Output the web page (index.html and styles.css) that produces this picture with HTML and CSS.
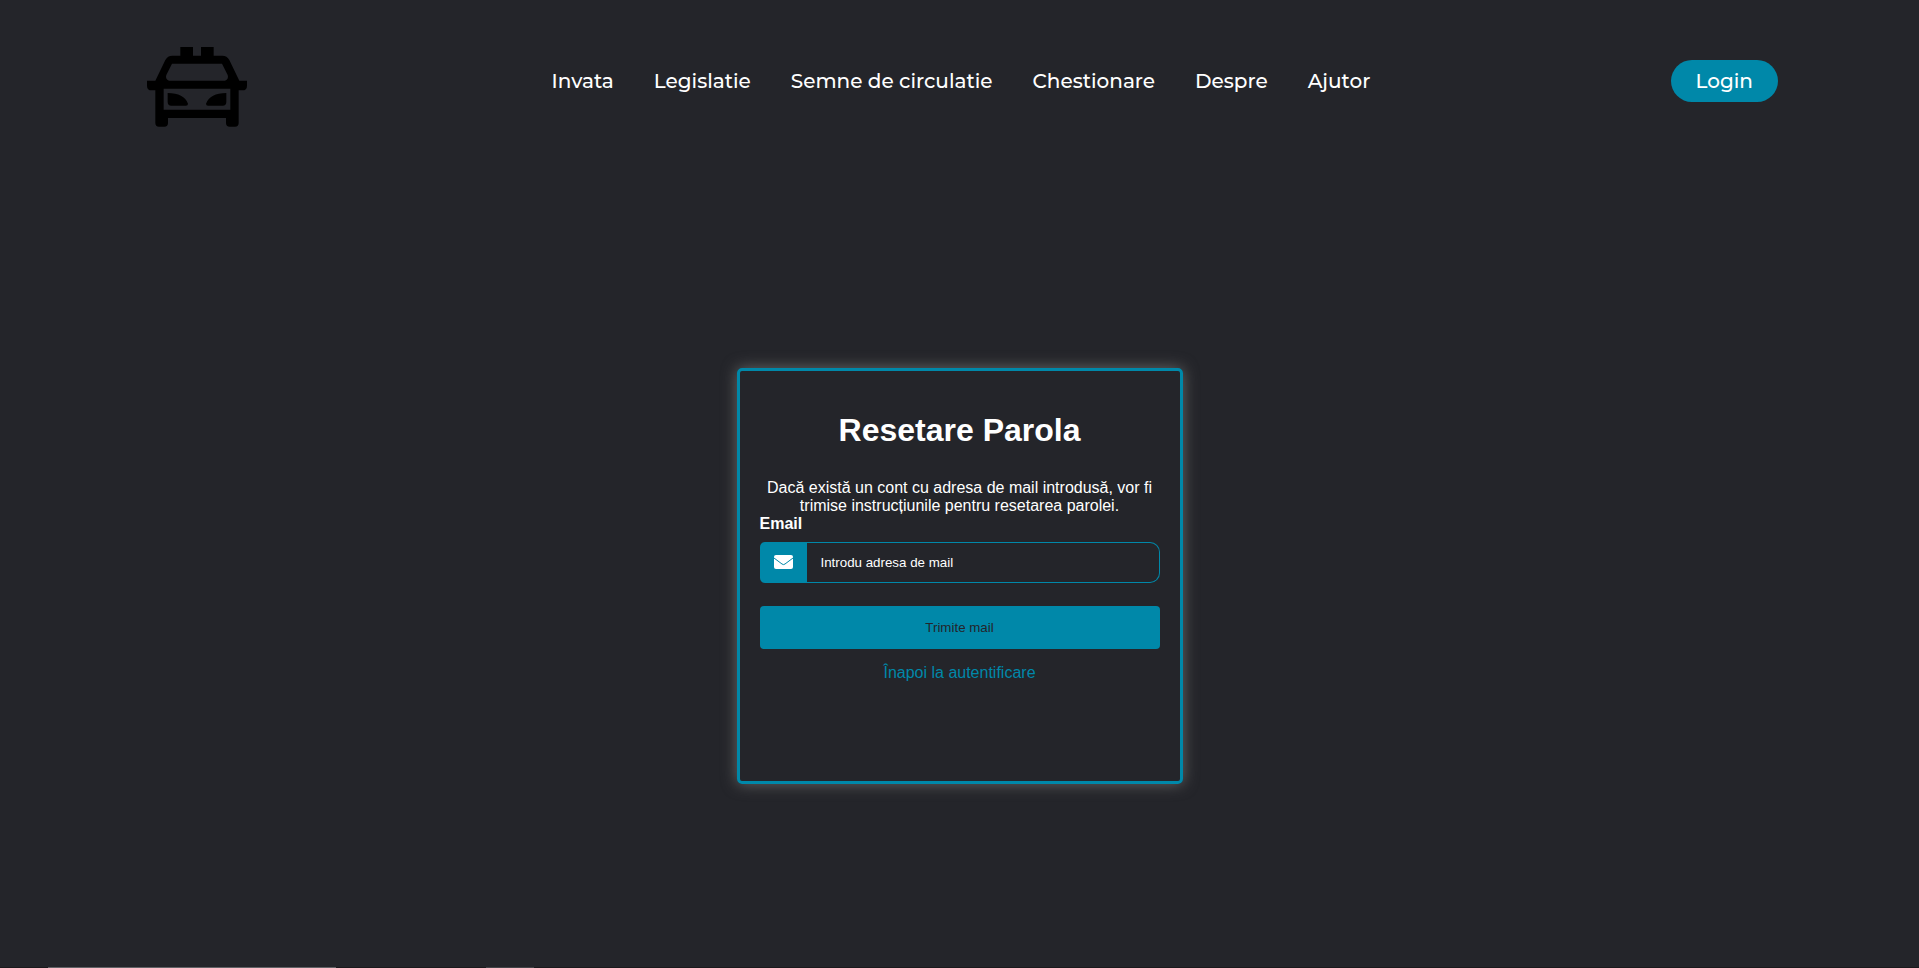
FILE: index.html
```html
<!DOCTYPE html>
<html lang="ro">
<head>
<meta charset="utf-8">
<title>Resetare Parola</title>
<meta name="viewport" content="width=device-width, initial-scale=1">
<link rel="stylesheet" href="styles.css">
</head>
<body>
<header class="header">
  <a class="logo" href="#" aria-label="Acasa">
    <svg class="logo-icon" viewBox="51 16 300 276" aria-hidden="true">
      <path fill-rule="evenodd" d="M151 52H189V78H213V52H251V78H277Q291 78 298 91L328 153H351V168Q351 182 337 182H326V280Q326 291 315 291H299Q288 291 288 280V265H114V280Q114 291 103 291H87Q76 291 76 280V182H65Q51 182 51 168V153H76L106 91Q113 78 127 78H151ZM126 102 109 136Q105 148 117 153H285Q297 148 293 136L276 102ZM101 177V240H301V177Z"/>
      <path d="M113 190Q162 190 174 222Q174 228 168 228H124Q113 228 113 217ZM289 190Q240 190 228 222Q228 228 234 228H278Q289 228 289 217Z"/>
    </svg>
  </a>
  <nav>
    <ul class="nav-links">
      <li><a href="#">Invata</a></li>
      <li><a href="#">Legislatie</a></li>
      <li><a href="#">Semne de circulatie</a></li>
      <li><a href="#">Chestionare</a></li>
      <li><a href="#">Despre</a></li>
      <li><a href="#">Ajutor</a></li>
    </ul>
  </nav>
  <button class="login" type="button">Login</button>
</header>
<main class="main">
  <form class="card">
    <h1 class="title">Resetare Parola</h1>
    <p class="info">Dacă există un cont cu adresa de mail introdusă, vor fi trimise instrucțiunile pentru resetarea parolei.</p>
    <label class="label" for="email">Email</label>
    <div class="field">
      <span class="field-icon">
        <svg class="envelope" viewBox="0 0 19 14" aria-hidden="true">
          <rect width="19" height="14" rx="2"/>
          <path d="M0 3 8 9Q9.500 10.200 11 9L19 3"/>
        </svg>
      </span>
      <input class="input" id="email" type="email" placeholder="Introdu adresa de mail">
    </div>
    <button class="submit" type="submit">Trimite mail</button>
    <a class="back" href="#">Înapoi la autentificare</a>
  </form>
</main>
<footer class="edge"></footer>
</body>
</html>
```
FILE: styles.css
```css
* {
  box-sizing: border-box;
  margin: 0;
  padding: 0;
}

body {
  display: flex;
  flex-direction: column;
  min-height: 100vh;
  background: #24252a;
  color: #fff;
  font-family: Arial, "Liberation Sans", sans-serif;
  font-size: 16px;
  line-height: 18px;
}

a {
  text-decoration: none;
}

.header {
  display: grid;
  grid-template-columns: 1fr auto 1fr;
  align-items: center;
  padding: 35px 141px 35px 144px;
}

.logo {
  padding-left: 3px;
}

.logo-icon {
  display: block;
  width: 100px;
  height: 92px;
  fill: #000;
}

.nav-links {
  display: flex;
  gap: 40px;
  list-style: none;
}

.nav-links a,
.login {
  color: #fff;
  font-family: Montserrat, Inter, sans-serif;
  font-size: 20px;
  font-weight: 500;
  line-height: 24px;
}

.login {
  justify-self: end;
  padding: 9px 25px;
  border: 0;
  border-radius: 50px;
  background: #0088a9;
  cursor: pointer;
}

.main {
  display: flex;
  flex: 1;
  align-items: center;
  justify-content: center;
  padding-top: 22px;
}

.card {
  display: flex;
  flex-direction: column;
  width: 446px;
  min-height: 416px;
  padding: 20px;
  border: 3px solid #0088a9;
  border-radius: 5px;
  box-shadow: 0 0 15px #666;
}

.title {
  margin: 21px 0 31px;
  font-size: 32px;
  line-height: 36px;
  text-align: center;
}

.info {
  text-align: center;
}

.label {
  font-weight: 700;
}

.field {
  display: flex;
  height: 41px;
  margin: 9px 0 23px;
}

.field-icon {
  display: grid;
  place-items: center;
  width: 47px;
  border-radius: 5px 0 0 5px;
  background: #0088a9;
}

.envelope {
  width: 19px;
  height: 14px;
  fill: #fff;
}

.envelope path {
  fill: none;
  stroke: #0088a9;
}

.input {
  flex: 1;
  min-width: 0;
  padding: 0 14px;
  border: 1px solid #0088a9;
  border-left: 0;
  border-radius: 0 10px 10px 0;
  background: transparent;
  color: #fff;
}

.input::placeholder {
  color: #fff;
}

.submit {
  height: 43px;
  border: 0;
  border-radius: 4px;
  background: #0088a9;
  color: #24252a;
  cursor: pointer;
}

.back {
  align-self: center;
  margin-top: 15px;
  color: #0088a9;
}

.edge {
  height: 1px;
  background: linear-gradient(90deg, #1b191c 48px, #626266 48px 336px, #1b191c 336px 486px, #444448 486px 534px, #1b191c 534px);
}
```
